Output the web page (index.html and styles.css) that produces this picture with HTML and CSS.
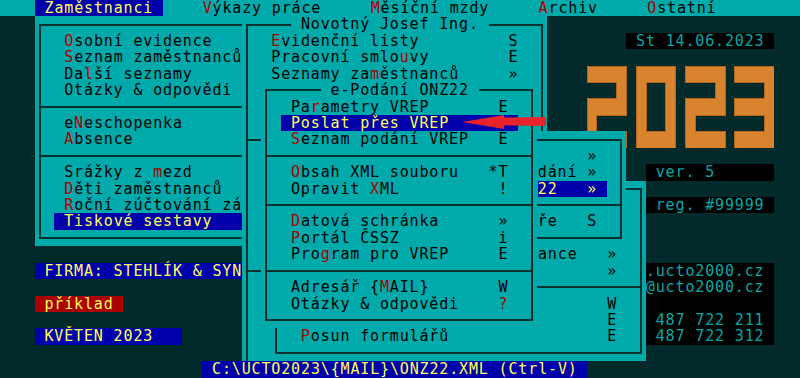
FILE: index.html
```html
<!DOCTYPE html>
<html lang="cs">
<head>
    <meta charset="UTF-8">
    <title>UCTO 2023 - Mzdy</title>
    <link rel="stylesheet" href="styles.css">
</head>
<body>
    <div class="screen">
        <div class="menubar">   <span class="sel"> Zaměstnanci </span>    <span class="k">V</span>ýkazy práce     <span class="k">M</span>ěsíční mzdy     <span class="k">A</span>rchiv     <span class="k">O</span>statní</div>

        <!-- Zaměstnanci dropdown -->
        <div class="win win-l">
            <div class="ln"></div>
            <div class="ln">   <span class="k">O</span>sobní evidence</div>
            <div class="ln">   <span class="k">S</span>eznam zaměstnanců</div>
            <div class="ln">   Da<span class="k">l</span>ší seznamy</div>
            <div class="ln">   Otázky &amp; odpovědi</div>
            <div class="sep"></div>
            <div class="ln">   e<span class="k">N</span>eschopenka</div>
            <div class="ln">   <span class="k">A</span>bsence</div>
            <div class="sep"></div>
            <div class="ln">   Srážky z <span class="k">m</span>ezd</div>
            <div class="ln">   <span class="k">D</span>ěti zaměstnanců</div>
            <div class="ln">   <span class="k">R</span>oční zúčtování záloh</div>
            <div class="ln">  <span class="sel"> Tiskové sestavy    </span></div>
            <div class="ln"></div>
        </div>

        <!-- Novotný Josef Ing. -->
        <div class="win win-n">
            <div class="ln">     <span class="title"> Novotný Josef Ing. </span></div>
            <div class="ln">   <span class="k">E</span>videnční listy         S</div>
            <div class="ln">   Pracovní smlo<span class="k">u</span>vy        E</div>
            <div class="ln">   Seznamy za<span class="k">m</span>ěstnanců     »</div>
            <div class="ln"></div>
            <div class="ln"></div>
            <div class="ln"></div>
            <div class="sep"></div>
            <div class="ln"></div>
            <div class="ln"></div>
            <div class="ln"></div>
            <div class="ln"></div>
            <div class="ln"></div>
            <div class="ln"></div>
            <div class="ln"></div>
            <div class="sep"></div>
            <div class="ln"></div>
            <div class="ln"></div>
            <div class="ln"></div>
            <div class="ln"></div>
            <div class="ln"></div>
            <div class="ln"></div>
        </div>

        <!-- submenu behind, lower part -->
        <div class="win win-w4">
            <div class="ln"></div>
            <div class="ln"></div>
            <div class="ln"></div>
            <div class="ln"></div>
            <div class="ln">                           ance   »</div>
            <div class="ln">                                  »</div>
            <div class="sep"></div>
            <div class="ln">                                  W</div>
            <div class="ln">                                  E</div>
            <div class="ln">   <span class="k">P</span>osun formulářů                E</div>
            <div class="ln"></div>
        </div>

        <!-- submenu behind, upper part -->
        <div class="win win-w3">
            <div class="ln"></div>
            <div class="ln">                       »</div>
            <div class="ln">                  dání »</div>
            <div class="ln">                  <span class="sel">22   » </span></div>
            <div class="sep"></div>
            <div class="ln">                  ře   S</div>
            <div class="ln"></div>
        </div>

        <!-- e-Podání ONZ22 -->
        <div class="win win-ep">
            <div class="ln">      <span class="title"> e-Podání ONZ22 </span></div>
            <div class="ln">   Pa<span class="k">r</span>ametry VREP       E</div>
            <div class="ln">  <span class="sel"> Poslat přes VREP       </span></div>
            <div class="ln">   <span class="k">S</span>eznam podání VREP   E</div>
            <div class="sep"></div>
            <div class="ln">   <span class="k">O</span>bsah XML souboru   *T</div>
            <div class="ln">   Opravit <span class="k">X</span>ML          !</div>
            <div class="sep"></div>
            <div class="ln">   <span class="k">D</span>atová schránka      »</div>
            <div class="ln">   <span class="k">P</span>ortál ČSSZ          i</div>
            <div class="ln">   Pro<span class="k">g</span>ram pro VREP     E</div>
            <div class="sep"></div>
            <div class="ln">   Adresář {<span class="k">M</span>AIL}       W</div>
            <div class="ln">   Otázky &amp; odpovědi    <span class="k">?</span></div>
            <div class="ln"></div>
        </div>

        <div class="box date"> St 14.06.2023</div>

        <svg class="year" viewBox="0 0 19 5" preserveAspectRatio="none">
            <path d="M0 0H4V3H1V4H4V5H0V2H3V1H0Z"/>
            <path fill-rule="evenodd" d="M5 0H9V5H5Z M6 1V4H8V1Z"/>
            <path d="M10 0H14V3H11V4H14V5H10V2H13V1H10Z"/>
            <path d="M15 0H19V5H15V4H18V3H15V2H18V1H15Z"/>
        </svg>

        <div class="box ver"> ver. 5</div>
        <div class="box reg"> reg. #99999</div>
        <div class="box contact">
            <div class="ln">.ucto2000.cz</div>
            <div class="ln">@ucto2000.cz</div>
            <div class="ln"></div>
            <div class="ln"> 487 722 211</div>
            <div class="ln"> 487 722 312</div>
        </div>

        <div class="tag firma"> FIRMA: STEHLÍK &amp; SYN</div>
        <div class="tag priklad"> příklad</div>
        <div class="tag obdobi"> KVĚTEN 2023</div>
        <div class="tag status"> C:\UCTO2023\{MAIL}\ONZ22.XML (Ctrl-V)</div>

        <svg class="arrow" width="88" height="22" viewBox="0 0 88 22">
            <polygon points="2,11 44,4 44,6.5 86,6 86,15 44,14.5 44,18"/>
        </svg>
    </div>
</body>
</html>
```

FILE: styles.css
```css
:root {
    --cw: 9.86px;
    --rh: 16.43px;
    --teal: #00aaaa;
    --dark: #022a2a;
    --line: #0a3030;
    --blue: #0000aa;
    --yellow: #ffff55;
    --red: #aa0000;
}
body {
    margin: 0;
    background: var(--dark);
    overflow: hidden;
    font-family: "DejaVu Sans Mono", "Liberation Mono", monospace;
    font-size: 15px;
    letter-spacing: 0.85px;
    line-height: var(--rh);
    color: #000;
}
.screen {
    position: relative;
    width: 800px;
    height: 378px;
    overflow: hidden;
    display: grid;
    grid-template-columns: 5px repeat(80, var(--cw)) 1fr;
    grid-template-rows: repeat(23, var(--rh));
}
.menubar {
    grid-column: 1 / -1;
    grid-row: 1;
    background: var(--teal);
    padding-left: 5px;
    white-space: pre;
}
.sel {
    display: inline-block;
    height: var(--rh);
    vertical-align: top;
    background: var(--blue);
    color: var(--yellow);
}
.k {
    color: var(--red);
}

/* windows */
.win {
    position: relative;
    display: flex;
    flex-direction: column;
    background: var(--teal);
    overflow: hidden;
}
.win::before {
    content: "";
    position: absolute;
    inset: calc(var(--rh) / 2 - 1px) calc(var(--cw) / 2 - 1px);
    border: 2px solid var(--line);
    pointer-events: none;
}
.ln {
    flex: none;
    height: var(--rh);
    white-space: pre;
}
.sep {
    flex: none;
    height: 2px;
    margin: calc(var(--rh) / 2 - 1px) calc(var(--cw) / 2 - 1px);
    background: var(--line);
}
.title {
    position: relative;
    display: inline-block;
    height: var(--rh);
    vertical-align: top;
    background: var(--teal);
}
.win-l {
    grid-column: 5 / 27;
    grid-row: 2 / 16;
    z-index: 1;
}
.win-n {
    grid-column: 26 / 57;
    grid-row: 2 / 24;
    z-index: 2;
}
.win-w4 {
    grid-column: 29 / 67;
    grid-row: 12 / 23;
    z-index: 3;
}
.win-w3 {
    grid-column: 38 / 65;
    grid-row: 9 / 16;
    z-index: 4;
}
.win-ep {
    grid-column: 28 / 56;
    grid-row: 6 / 21;
    z-index: 5;
}

/* right panel */
.box {
    background: #000;
    color: var(--teal);
    white-space: pre;
}
.date {
    grid-column: 65 / 80;
    grid-row: 3;
}
.ver {
    grid-column: 67 / 80;
    grid-row: 11;
}
.reg {
    grid-column: 67 / 80;
    grid-row: 13;
}
.contact {
    grid-column: 67 / 80;
    grid-row: 17 / 22;
    white-space: normal;
}
.year {
    grid-column: 61 / 80;
    grid-row: 5 / 10;
    width: 100%;
    height: 100%;
    fill: #d9832e;
    stroke: #b4661f;
    stroke-width: 1px;
    shape-rendering: crispEdges;
    z-index: 0;
}
.year path {
    vector-effect: non-scaling-stroke;
}

/* left info + status */
.tag {
    white-space: pre;
    background: var(--blue);
    color: var(--yellow);
}
.firma {
    grid-column: 5 / 26;
    grid-row: 17;
}
.priklad {
    grid-column: 5 / 14;
    grid-row: 19;
    background: var(--red);
}
.obdobi {
    grid-column: 5 / 20;
    grid-row: 21;
}
.status {
    grid-column: 22 / 61;
    grid-row: 23;
    z-index: 10;
}

.arrow {
    position: absolute;
    left: 460px;
    top: 111px;
    fill: #e8242a;
    z-index: 20;
}
```
